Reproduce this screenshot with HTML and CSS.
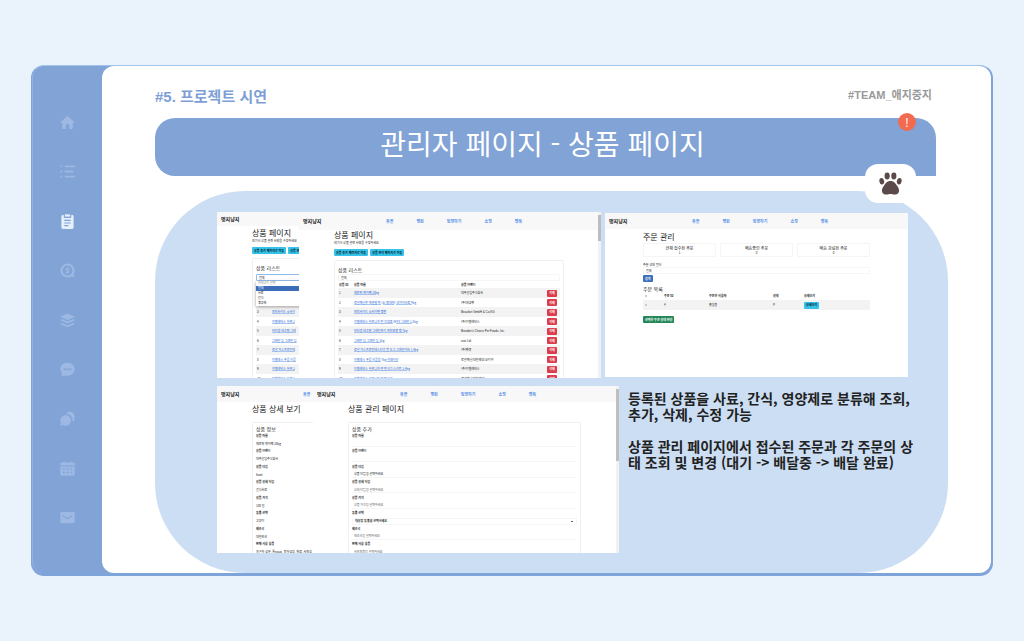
FILE: index.html
```html
<!DOCTYPE html>
<html lang="ko">
<head>
<meta charset="utf-8">
<meta name="viewport" content="width=device-width, initial-scale=1">
<title>관리자 페이지 - 상품 페이지</title>
<link rel="stylesheet" href="styles.css">
</head>
<body>
<div class="slide">
  <nav class="rail" aria-label="목차">
    <a href="#home" aria-label="홈"><svg viewBox="0 0 16 16"><path d="M8 .8 .6 7.6c-.4.4-.2 1 .4 1h1.3v5.2c0 .6.4 1 1 1h2.9v-4.2c0-.5.3-.8.8-.8h2c.5 0 .8.3.8.8v4.2h2.9c.6 0 1-.4 1-1V8.6H15c.6 0 .8-.6.4-1z"/></svg></a>
    <a href="#list" aria-label="목록"><svg viewBox="0 0 16 16"><path d="M.5 1.5h2v2h-2zM5 1.5h11v2H5zM.5 7h2v2h-2zM5 7h9v2H5zM.5 12.5h2v2h-2zM5 12.5h11v2H5z"/></svg></a>
    <a class="current" href="#demo" aria-label="시연"><svg viewBox="0 0 16 16"><path fill-rule="evenodd" d="M4 1v2.2c0 .6.4 1 1 1h6c.6 0 1-.4 1-1V1h1c.9 0 1.500.6 1.500 1.500v12c0 .9-.6 1.500-1.500 1.500H3c-.9 0-1.500-.6-1.500-1.500v-12C1.500 1.600 2.100 1 3 1zM4.500 6.200v1.200h7V6.200zm0 2.800v1.200h7V9zm0 2.800V13H9v-1.200z"/><path d="M5.200.4h5.600v2.400H5.200z"/></svg></a>
    <a href="#cost" aria-label="비용"><svg viewBox="0 0 16 16"><path fill-rule="evenodd" d="M8 .5a7.500 7.500 0 1 0 3.500 14.100h4v-1.800l-1.300-.6A7.500 7.500 0 0 0 8 .5zm0 2.200a5.300 5.300 0 1 1 0 10.600A5.300 5.300 0 0 1 8 2.700z"/><path d="M7.400 4.600h1.200v.8l1.400.4v1.100L8 6.700v.8l2 .6v2l-1.400.6v.8H7.400v-.8L6 10.300V9.200l2 .3v-.8l-2-.6V6l1.400-.6z"/></svg></a>
    <a href="#stack" aria-label="구조"><svg viewBox="0 0 16 16"><path d="M8 .5 16 4 8 7.500 0 4zM1.800 6.300 8 9l6.200-2.700L16 7.600l-8 3.700-8-3.700zM1.800 10.300 8 13l6.200-2.700L16 11.600l-8 3.700-8-3.700z"/></svg></a>
    <a href="#chat" aria-label="대화"><svg viewBox="0 0 16 16"><path fill-rule="evenodd" d="M8 .8c4.300 0 7.600 3 7.600 6.900S12.300 14.600 8 14.600H1.200l1-2.500A6.700 6.700 0 0 1 .4 7.700C.4 3.800 3.700.8 8 .8zM4 6.700v2h2v-2zm3 0v2h2v-2zm3 0v2h2v-2z"/></svg></a>
    <a href="#talk" aria-label="의견"><svg viewBox="0 0 16 16"><path d="M10.300.6a5.200 5.200 0 0 1 4.700 7.600l.6 2.500-2.300-.4c.2-4-2.600-7-6.900-7C7.200 1.600 8.600.6 10.300.6z"/><path d="M6.200 4.300a5.700 5.700 0 1 1-2.700 10.800l-3.100.6.600-2.900A5.700 5.700 0 0 1 6.200 4.300z"/></svg></a>
    <a href="#plan" aria-label="일정"><svg viewBox="0 0 16 16"><path fill-rule="evenodd" d="M3.500.4h1.700v1.300h5.600V.4h1.700v1.300h1.700c.9 0 1.500.6 1.500 1.500v1.500H.3V3.200c0-.9.6-1.500 1.500-1.500h1.700zM.3 5.800h15.400v8.400c0 .9-.6 1.500-1.500 1.500H1.800c-.9 0-1.500-.6-1.500-1.500zM3 8v1.300h2V8zm4 0v1.300h2V8zm4 0v1.300h2V8zm-8 3.500v1.300h2v-1.300zm4 0v1.300h2v-1.300zm4 0v1.300h2v-1.300z"/></svg></a>
    <a href="#mail" aria-label="연락"><svg viewBox="0 0 16 16"><path fill-rule="evenodd" d="M2 2h12c1 0 1.800.7 1.800 1.700v8.600c0 1-.8 1.700-1.800 1.700H2c-1 0-1.800-.7-1.800-1.700V3.700C.2 2.700 1 2 2 2zm.8 3.200v1.300L8 9.800l5.200-3.300V5.200L8 8.400z"/></svg></a>
  </nav>

  <main class="sheet">
    <header class="sheet-head">
      <h1>#5. 프로젝트 시연</h1>
      <p>#TEAM_애지중지</p>
    </header>

    <div class="banner">
      <h2>관리자 페이지 - 상품 페이지</h2>
      <span class="alert">!</span>
      <span class="paw"><svg viewBox="0 0 24 24" role="img" aria-label="발바닥"><ellipse cx="2.900" cy="9.700" rx="2.500" ry="3.400" transform="rotate(-12 2.900 9.700)"/><ellipse cx="8.500" cy="4.100" rx="2.700" ry="3.600"/><ellipse cx="15.500" cy="4.100" rx="2.700" ry="3.600"/><ellipse cx="21.100" cy="9.700" rx="2.500" ry="3.400" transform="rotate(12 21.100 9.700)"/><path d="M12 9.500c-3.700 0-5.200 2.400-6.800 4.800-1.500 2-2.300 3.600-2.100 5.400.3 2.800 2.400 4 4.900 3.900 1.500-.1 2.500-.6 4-.6s2.500.5 4 .6c2.500.1 4.600-1.100 4.900-3.900.2-1.800-.6-3.400-2.100-5.400-1.600-2.400-3.100-4.800-6.800-4.800z"/></svg></span>
    </div>

    <section class="board">
      <div class="row row-top">
        <div class="shot">
          <div class="pane pane-back">
            <header class="bar"><b>멍지냥지</b></header>
            <div class="page">
              <h3>상품 페이지</h3>
              <p class="lead">여기서 상품 관련 사항을 수정하세요</p>
              <div class="buttons"><button>상품 추가 페이지로 이동</button><button>상품 관리</button></div>
              <div class="card">
                <h4>상품 리스트</h4>
                <div class="picker">
                  <select class="open" aria-label="카테고리"><option>전체</option></select>
                  <ul class="menu"><li class="hint">카테고리 선택</li><li class="on">전체</li><li>사료</li><li>간식</li><li>영양제</li></ul>
                </div>
                <table class="goods">
                  <colgroup><col class="c-id"><col></colgroup>
                  <tbody>
                    <tr><td>3</td><td><a href="#p3">퍼피사리드 소사이</a></td></tr>
                    <tr><td>4</td><td><a href="#p4">이벨레닥스 실프닝</a></td></tr>
                    <tr><td>5</td><td><a href="#p5">닥터랩 내추럴 그레</a></td></tr>
                    <tr><td>6</td><td><a href="#p6">그레인 덤 그레인 덤</a></td></tr>
                    <tr><td>7</td><td><a href="#p7">로얄 가스트로인테</a></td></tr>
                    <tr><td>8</td><td><a href="#p8">이벨레시 푸름 이름</a></td></tr>
                    <tr><td>9</td><td><a href="#p9">이벨레닥스 실프닝</a></td></tr>
                    <tr><td>10</td><td><a href="#p10">이벨레닥스 실프닝</a></td></tr>
                  </tbody>
                </table>
              </div>
            </div>
          </div>
          <div class="pane pane-front">
            <header class="bar"><b>멍지냥지</b><nav><a href="#a">동물</a><a href="#b">병원</a><a href="#c">입양하기</a><a href="#d">쇼핑</a><a href="#e">펫톡</a></nav></header>
            <div class="page">
              <h3>상품 페이지</h3>
              <p class="lead">여기서 상품 관련 사항을 수정하세요</p>
              <div class="buttons"><button>상품 추가 페이지로 이동</button><button>상품 관리 페이지로 이동</button></div>
              <div class="card">
                <h4>상품 리스트</h4>
                <div class="picker"><select aria-label="카테고리"><option>전체</option></select></div>
                <table class="goods">
                  <thead><tr><th class="c-id">상품 ID</th><th>상품 이름</th><th class="c-brand">상품 브랜드</th><th class="c-del"></th></tr></thead>
                  <tbody>
                    <tr><td>1</td><td><a href="#p1">제로픽 캐어팩 20kg</a></td><td>대주산업주식회사</td><td><button>삭제</button></td></tr>
                    <tr><td>2</td><td><a href="#p2">로얄캐닌독 에센셜 독 (소/중대형) 강아지사료 4kg</a></td><td>(주)대성펫</td><td><button>삭제</button></td></tr>
                    <tr><td>3</td><td><a href="#p3">퍼피사리드 소사이벤 캣벤</a></td><td class="latin">Beaufort GmbH &amp; Co.KG</td><td><button>삭제</button></td></tr>
                    <tr><td>4</td><td><a href="#p4">이벨레닥스 실프닝치 떤 격정료 AFFE 그레인 1.8kg</a></td><td>(주)이벨레닥스</td><td><button>삭제</button></td></tr>
                    <tr><td>5</td><td><a href="#p5">닥터랩 내추럴 그레인프리 퍼피포뮬 캣 7kg</a></td><td class="latin">Breeder's Choice Pet Foods, Inc.</td><td><button>삭제</button></td></tr>
                    <tr><td>6</td><td><a href="#p6">그레인 덤 그레인 덤 1kg</a></td><td class="latin">ziwi Ltd</td><td><button>삭제</button></td></tr>
                    <tr><td>7</td><td><a href="#p7">로얄 가스트로인테스티널 캔 도그 그레인리버 1.4kg</a></td><td>(주)펫쿡</td><td><button>삭제</button></td></tr>
                    <tr><td>8</td><td><a href="#p8">이벨레시 푸름 이름을 7kg 이태리산</a></td><td>로얄캐닌(대한제당)코리아</td><td><button>삭제</button></td></tr>
                    <tr><td>9</td><td><a href="#p9">이벨레닥스 실프닝치 떤 번식기 스키트 1.4kg</a></td><td>(주)이벨레닥스</td><td><button>삭제</button></td></tr>
                    <tr><td>10</td><td><a href="#p10">이벨레닥스 실프닝치 떤 번식기</a></td><td>로얄캐닌(대한제당)</td><td><button>삭제</button></td></tr>
                  </tbody>
                </table>
              </div>
            </div>
          </div>
          <div class="scroll"><i></i></div>
        </div>

        <div class="shot shot-order">
          <div class="pane">
            <header class="bar"><b>멍지냥지</b><nav><a href="#a">동물</a><a href="#b">병원</a><a href="#c">입양하기</a><a href="#d">쇼핑</a><a href="#e">펫톡</a></nav></header>
            <div class="page">
              <h3>주문 관리</h3>
              <div class="counts">
                <div><b>현재 접수된 주문</b><span>1</span></div>
                <div><b>배송중인 주문</b><span>0</span></div>
                <div><b>배송 완료된 주문</b><span>0</span></div>
              </div>
              <label class="filter" for="state">주문 상태 필터</label>
              <div class="picker"><select id="state"><option>전체</option></select></div>
              <button class="search">검색</button>
              <h4>주문 목록</h4>
              <table class="orders">
                <thead><tr><th class="o-check"><input type="checkbox" aria-label="전체 선택"></th><th class="o-id">주문 ID</th><th class="o-name">주문한 사용자</th><th class="o-state">상태</th><th>상세보기</th></tr></thead>
                <tbody><tr><td><input type="checkbox" aria-label="주문 선택"></td><td>4</td><td>홍길동</td><td>P</td><td><button>상세보기</button></td></tr></tbody>
              </table>
              <button class="apply">선택한 주문 상태 변경</button>
            </div>
          </div>
        </div>
      </div>

      <div class="row row-bottom">
        <div class="shot shot-detail">
          <div class="pane pane-info">
            <header class="bar"><b>멍지냥지</b><nav><a href="#a">동물</a></nav></header>
            <div class="page">
              <h3>상품 상세 보기</h3>
              <div class="card">
                <h4>상품 정보</h4>
                <dl class="lines">
                  <dt>상품 이름</dt><dd>제로픽 캐어팩 20kg</dd>
                  <dt>상품 브랜드</dt><dd>대주산업주식회사</dd>
                  <dt>상품 타입</dt><dd>food</dd>
                  <dt>상품 상세 타입</dt><dd>건식사료</dd>
                  <dt>상품 가격</dt><dd>100 원</dd>
                  <dt>동물 선택</dt><dd>고양이</dd>
                  <dt>제조국</dt><dd>대한민국</dd>
                  <dt>판매 사용 용품</dt><dd>유근자 성분, 특soup, 동자성장, 재료, 사용성</dd>
                </dl>
              </div>
            </div>
          </div>
          <div class="pane pane-form">
            <header class="bar"><b>멍지냥지</b><nav><a href="#a">동물</a><a href="#b">병원</a><a href="#c">입양하기</a><a href="#d">쇼핑</a><a href="#e">펫톡</a></nav></header>
            <div class="page">
              <h3>상품 관리 페이지</h3>
              <div class="card">
                <h4>상품 추가</h4>
                <form class="lines">
                  <label for="f1">상품 이름</label><input id="f1" type="text">
                  <label for="f2">상품 브랜드</label><input id="f2" type="text">
                  <label for="f3">상품 타입</label><input id="f3" type="text" value="상품 타입을 선택하세요">
                  <label for="f4">상품 상세 타입</label><input id="f4" type="text" placeholder="상세 타입을 선택하세요">
                  <label for="f5">상품 가격</label><input id="f5" type="text" placeholder="상품 가격을 선택하세요">
                  <label for="f6">동물 선택</label><span class="drop"><select id="f6"><option>대상할 동물을 선택하세요</option></select></span>
                  <label for="f7">제조국</label><input id="f7" type="text" placeholder="제조국을 선택하세요">
                  <label for="f8">판매 사용 용품</label><input id="f8" type="text" placeholder="사용용품을 선택하세요">
                </form>
              </div>
            </div>
          </div>
          <div class="scroll scroll-long"><i></i></div>
        </div>

        <div class="notes">
          <p>등록된 상품을 사료, 간식, 영양제로 분류해 조회, 추가, 삭제, 수정 가능</p>
          <p>상품 관리 페이지에서 접수된 주문과 각 주문의 상태 조회 및 변경 (대기 -&gt; 배달중 -&gt; 배달 완료)</p>
        </div>
      </div>
    </section>
  </main>
</div>
</body>
</html>
```

FILE: styles.css
```css
* { box-sizing: border-box; }

body {
  margin: 0;
  padding: 65px 31px;
  background: #eaf2fc;
  font-family: "Noto Sans CJK KR", "Noto Sans", sans-serif;
  color: #222;
}

h1, h2, h3, h4, p, ul, dl, dd { margin: 0; padding: 0; }
a { text-decoration: none; }
button, input, select { font-family: inherit; margin: 0; }

/* Slide frame */
.slide {
  display: flex;
  background: #81a3d5;
  border: 1px solid #7ea4da;
  border-top-color: #a3c3ef;
  border-width: 1px 2px 3px 1px;
  border-radius: 13px;
}

.rail {
  flex: 0 0 70px;
  display: flex;
  flex-direction: column;
  align-items: center;
  justify-content: space-between;
  padding: 49px 0 48px;
  border-left: 1px solid #93b3e2;
  border-radius: 12px 0 0 12px;
}
.rail a { display: block; height: 15px; }
.rail svg { display: block; width: 15px; height: 15px; fill: #9cb8e3; }
.rail .current svg { fill: #e6effb; }

.sheet {
  flex: 1;
  min-width: 0;
  padding: 20px 43px 0 53px;
  background: #fff;
  border-radius: 12px;
}

.sheet-head {
  display: flex;
  justify-content: space-between;
  align-items: center;
  margin: 0 16px 10px 0;
  line-height: 22px;
  font-family: "Liberation Sans", "Noto Sans CJK KR", sans-serif;
}
.sheet-head h1 { font-size: 15px; color: #7d9fd6; }
.sheet-head p { font-size: 11px; font-weight: 700; color: #9a9a9a; line-height: 18px; align-self: flex-start; }

.banner {
  position: relative;
  z-index: 1;
  margin-right: 12px;
  padding: 3px 6px 11px 0;
  background: #81a3d5;
  border-radius: 20px 20px 0 20px;
  text-align: center;
}
.banner h2 { font-size: 28px; font-weight: 400; line-height: 44px; color: #fff; }

.alert {
  position: absolute;
  top: -5px;
  right: 20px;
  width: 18px;
  height: 18px;
  border-radius: 50%;
  background: #f26b50;
  color: #fff;
  font-size: 12px;
  line-height: 17px;
}
.paw {
  position: absolute;
  right: 20px;
  bottom: -27px;
  display: flex;
  align-items: center;
  justify-content: center;
  width: 51px;
  height: 39px;
  border-radius: 13px;
  background: #fff;
}
.paw svg { width: 23px; height: 23px; fill: #5b4a49; }

.board {
  display: flex;
  flex-direction: column;
  gap: 8px;
  margin-top: 15px;
  padding: 21px 40px 20px 62px;
  background: #ccdef3;
  border-radius: 90px;
}

.row { display: grid; }
.row-top { grid-template-columns: 384fr 303fr; gap: 4px; }
.row-bottom { grid-template-columns: 402fr 280fr; gap: 9px; }

.notes {
  display: flex;
  flex-direction: column;
  gap: 16px;
  padding-top: 4px;
  font-size: 14px;
  font-weight: 700;
  line-height: 16px;
  word-break: break-all;
  margin-right: -14px;
}

/* Captured admin screens */
.shot {
  display: flex;
  height: 166px;
  overflow: hidden;
  background: #fff;
  font-size: 3px;
  line-height: 4px;
  white-space: nowrap;
  color: #222;
}
.shot-order { margin-top: 1px; height: 164px; }
.shot-detail { height: 167px; }

.pane { flex: 1; min-width: 0; overflow: hidden; }
.pane-back { flex: 0 0 82px; }
.pane-info { flex: 0 0 96px; }

.bar {
  display: flex;
  align-items: center;
  height: 16px;
  padding-left: 4px;
  background: #f8f8f9;
}
.pane-back .bar { height: 14px; }
.pane-front .bar { height: 18px; }
.bar b { width: 20px; font-size: 5px; line-height: 6px; color: #111; }
.bar nav { display: flex; gap: 23px; margin-left: 63px; font-size: 4px; font-weight: 700; }
.bar a { color: #5a90e8; }
.pane-info .bar nav { margin-left: 62px; }

.page { padding: 2px 35px 0; }
.pane-front .page { padding-top: 0; }
.shot-order .page { padding: 3px 38px 0; }

.page h3 { font-size: 8px; font-weight: 400; line-height: 10px; }
.page h4 { font-size: 5px; font-weight: 400; line-height: 6px; }
.page .lead { margin-top: 1px; }

.page button {
  display: block;
  height: 7px;
  padding: 0 2px;
  border: 0;
  border-radius: 1px;
  background: #36c3ea;
  color: #012;
  font-size: 3px;
  font-weight: 700;
  line-height: 6px;
  white-space: nowrap;
}
.buttons { display: flex; gap: 2px; margin-top: 4px; }

.card {
  min-width: 230px;
  margin-top: 4px;
  padding: 6px 3px 0;
  border: 1px solid #f0f0f0;
  border-bottom: 0;
  border-radius: 2px 2px 0 0;
}
.shot-detail .card { margin-top: 8px; padding-top: 3px; }

.picker { position: relative; }
.pane-back .picker { margin-top: 3px; }
.pane-front .picker { margin-top: 1px; }
.picker select, .drop select {
  display: block;
  width: 100%;
  height: 7px;
  padding: 0 2px;
  border: 1px solid #f6f6f6;
  border-radius: 1px;
  background: #fff;
  appearance: none;
  font-size: 3px;
  line-height: 4px;
  color: #222;
}
.drop select { font-weight: 700; }
.picker .open { border-color: #8fbbe8; }

.menu {
  position: absolute;
  top: 7px;
  left: 0;
  width: 100%;
  list-style: none;
  background: #fff;
  box-shadow: 0 1px 3px #999;
}
.menu li { padding-left: 2px; line-height: 5px; }
.menu .hint { color: #888; }
.menu .on { background: #3c6db8; color: #fff; }

table { width: 100%; border-collapse: collapse; table-layout: fixed; }
th, td { padding: 0 1px; text-align: left; vertical-align: middle; }
th { color: #111; }

.goods th { height: 7px; }
.goods td { height: 9px; }
.goods tr:nth-child(odd) td { height: 10px; background: #f3f3f3; }
.pane-back .goods { margin-top: 26px; }
.goods a { color: #1f66d4; text-decoration: underline; text-decoration-thickness: 1px; text-underline-offset: 0; text-decoration-color: #a9c6f2; }
.goods .latin { font-family: "Liberation Sans", sans-serif; }
.goods button { width: 10px; background: #dc3c4c; color: #fff; }
.c-id { width: 15px; }
.c-brand { width: 86px; }
.c-del { width: 14px; }

.scroll { flex: 0 0 3px; padding-top: 3px; background: #f2f2f2; }
.scroll i { display: block; height: 26px; background: #bdbdbd; }
.scroll-long i { height: 72px; background: #bfc0ba; }

.counts { display: grid; grid-template-columns: 1fr 1fr 1fr; gap: 4px; margin-top: 1px; }
.counts div {
  display: flex;
  flex-direction: column;
  align-items: center;
  padding: 1px 0;
  border: 1px solid #f5f5f5;
  border-radius: 1px;
}
.counts b { font-size: 4px; line-height: 6px; font-weight: 400; }
.filter { display: block; margin-top: 6px; }
.page .search { margin: 1px 0 4px; background: #3d6fbd; color: #fff; }
.orders th { height: 8px; }
.orders td { height: 10px; background: #f3f3f3; }
.orders input { display: block; appearance: none; width: 2px; height: 2px; margin-left: 1px; background: #ccc; }
.o-check { width: 20px; }
.o-id { width: 45px; }
.o-name { width: 64px; }
.o-state { width: 31px; }
.page .apply { margin-top: 6px; background: #23875a; color: #fff; }

.lines {
  display: grid;
  grid-template-columns: 100%;
  grid-template-rows: repeat(16, 1fr);
  align-items: center;
  height: 124px;
}
.lines dt, .lines label { font-weight: 700; }
.lines input {
  width: 100%;
  height: 6px;
  padding: 0 2px;
  border: 0;
  border-bottom: 1px solid #f6f6f6;
  font-size: 3px;
  line-height: 4px;
  color: #222;
}
.lines input::placeholder { color: #666; }
.drop { position: relative; display: block; }
.drop::after {
  content: "";
  position: absolute;
  top: 3px;
  right: 4px;
  width: 2px;
  height: 1px;
  background: #666;
}
```
